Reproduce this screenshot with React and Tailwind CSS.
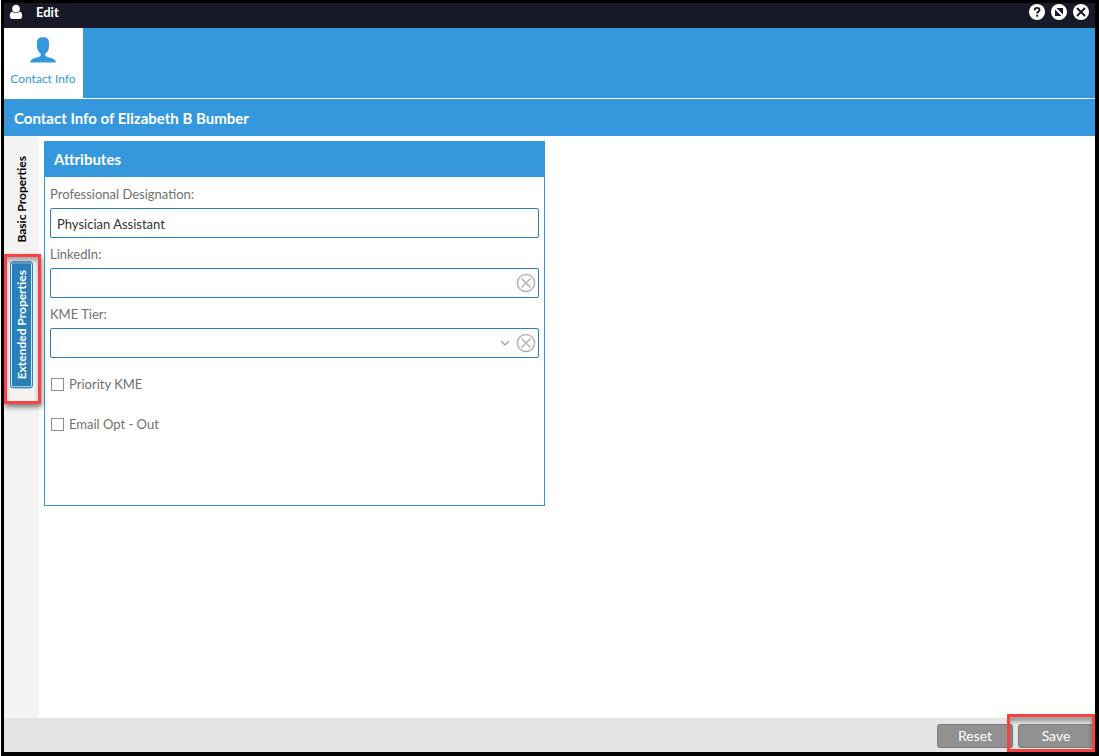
import React, { useState } from 'react';

function ClearIcon() {
  return (
    <svg viewBox="0 0 20 20" className="h-5 w-5" fill="none" stroke="#b3b3b3" strokeWidth="1.5" aria-hidden="true">
      <circle cx="10" cy="10" r="8.6" />
      <path d="M5.5 5.5l9 9M14.5 5.5l-9 9" />
    </svg>
  );
}

function PersonIcon() {
  return (
    <svg viewBox="0 0 14 16" className="h-4 w-3.5" fill="#fff" aria-hidden="true">
      <path d="M7 .8c2.200 0 3.900 1.700 3.900 3.900S9.200 8.600 7 8.600 3.100 6.900 3.100 4.700 4.800.8 7 .8z" />
      <path d="M3.400 7.400C4.400 8.500 5.600 9.100 7 9.100s2.600-.6 3.600-1.700c1.700.3 2.600 2 2.600 4.600 0 1.900-1 3-2.600 3H3.400C1.800 15 .8 13.900.8 12c0-2.600.9-4.300 2.600-4.600z" />
    </svg>
  );
}

function ContactIcon() {
  return (
    <svg viewBox="0 0 26 26" className="h-[26px] w-[26px]" fill="#3598dc" aria-hidden="true">
      <path d="M13 .2c4.300 0 6 2 6 5.500v3.800c0 3.200-1.600 6-3.700 7v1.900c.6 1 3.300 1.800 6.300 2.800 3 .9 4.200 2 4.200 4.400H.2c0-2.400 1.200-3.500 4.200-4.400 3-1 5.700-1.800 6.300-2.800v-1.900C8.600 15.500 7 12.700 7 9.500V5.700C7 2.200 8.700.2 13 .2z" />
    </svg>
  );
}

function WindowButton({ label, children }) {
  return (
    <button type="button" aria-label={label} className="h-4 w-4">
      <svg viewBox="0 0 16 16" className="h-4 w-4" fill="none" stroke="#171926" aria-hidden="true">
        <circle cx="8" cy="8" r="8" fill="#fff" stroke="none" />
        {children}
      </svg>
    </button>
  );
}

function SideTab({ label, active, onClick }) {
  const look = active
    ? 'border border-[#2980b9] bg-[#2980b9] text-white ring-1 ring-inset ring-[#d5e6f1]'
    : 'text-black';
  return (
    <button
      type="button"
      onClick={onClick}
      className={`flex w-[23px] rotate-180 items-center justify-center rounded-[3px] px-2 text-[12px] leading-4 font-bold [writing-mode:vertical-rl] ${look}`}
    >
      {label}
    </button>
  );
}

function Field({ id, label, children }) {
  return (
    <div>
      <label htmlFor={id} className="flex h-[30px] items-center pt-1 text-[13px]">
        {label}
      </label>
      <div className="flex h-[30px] items-center rounded-[2px] border border-[#2980b9] bg-white">{children}</div>
    </div>
  );
}

function Check({ id, label }) {
  return (
    <div className="flex h-10 items-center gap-[5px] px-px">
      <input id={id} type="checkbox" className="h-[13px] w-[13px] appearance-none border border-[#8c8c8c] bg-white checked:bg-[#2980b9]" />
      <label htmlFor={id} className="pt-0.5 text-[13px]">{label}</label>
    </div>
  );
}

const highlight = 'pointer-events-none absolute border-3 border-[#fa4141]';
const textBox = 'h-full min-w-0 flex-1 px-1.5 pt-0.5 text-[13px] text-[#333] outline-none';

export default function App() {
  const [tab, setTab] = useState('extended');
  const [designation, setDesignation] = useState('Physician Assistant');
  const [linkedIn, setLinkedIn] = useState('');
  const [tier, setTier] = useState('');

  return (
    <div className="ml-px flex min-h-screen flex-col border-3 border-r-4 border-b-4 border-black bg-white font-['Lato',sans-serif] text-[#707070]">
      <header className="flex h-[25px] items-start justify-between bg-[#171926] pr-1.5 pl-[5px] text-white">
        <div className="flex items-start gap-[13px]">
          <div className="pt-px"><PersonIcon /></div>
          <h1 className="text-[13px] leading-[18px] font-bold">Edit</h1>
        </div>
        <div className="flex gap-1.5 pt-px">
          <WindowButton label="Help">
            <path d="M5.700 6.200c0-1.500 1-2.300 2.400-2.300s2.400.8 2.400 2c0 1.600-2.300 1.700-2.300 3.600" strokeWidth="1.900" />
            <path d="M8.200 10.700v2" strokeWidth="2" />
          </WindowButton>
          <WindowButton label="Maximize">
            <path d="M5.500 4H12v6.500zM4 5.500V12h6.500z" fill="#171926" stroke="none" />
          </WindowButton>
          <WindowButton label="Close">
            <path d="M4 4l8 8M12 4l-8 8" strokeWidth="1.900" />
          </WindowButton>
        </div>
      </header>

      <nav className="flex h-[71px] border-b border-white bg-[#3598dc]">
        <button type="button" className="-mb-px flex w-[79px] flex-col items-center gap-1.5 bg-white pt-[9px] pr-px text-[12px] leading-5 text-[#3598dc]">
          <ContactIcon />
          Contact Info
        </button>
      </nav>

      <h2 className="flex h-[37px] items-center bg-[#3598dc] px-2.5 pt-px text-[15px] font-bold text-white">
        Contact Info of Elizabeth B Bumber
      </h2>

      <div className="flex flex-1">
        <aside className="flex w-[35px] shrink-0 flex-col items-center gap-2.5 bg-[#f3f3f3] pt-3 pr-px">
          <SideTab label="Basic Properties" active={tab === 'basic'} onClick={() => setTab('basic')} />
          <div className="relative">
            <SideTab label="Extended Properties" active={tab === 'extended'} onClick={() => setTab('extended')} />
            <div className={`${highlight} -top-[7px] -right-2 -bottom-4 -left-1.5 shadow-[1px_3px_5px_rgba(0,0,0,0.5),inset_0_4px_4px_rgba(0,0,0,0.3)]`} />
          </div>
        </aside>

        <main className="flex-1 p-[5px]">
          <section className="min-h-[365px] w-full max-w-[501px] border border-[#3598dc]">
            <h3 className="flex h-[35px] items-center bg-[#3598dc] px-[9px] text-[15px] font-bold text-white">Attributes</h3>
            <form className="px-[5px] pt-px">
              <Field id="designation" label="Professional Designation:">
                <input id="designation" value={designation} onChange={(e) => setDesignation(e.target.value)} className={textBox} />
              </Field>
              <Field id="linkedin" label="LinkedIn:">
                <input id="linkedin" value={linkedIn} onChange={(e) => setLinkedIn(e.target.value)} className={textBox} />
                <button type="button" aria-label="Clear LinkedIn" onClick={() => setLinkedIn('')} className="mr-0.5"><ClearIcon /></button>
              </Field>
              <Field id="tier" label="KME Tier:">
                <div className="relative flex flex-1">
                  <select id="tier" value={tier} onChange={(e) => setTier(e.target.value)} className="h-7 w-full appearance-none px-1.5 text-[13px] text-[#333] outline-none">
                    <option value=""></option>
                  </select>
                  <svg viewBox="0 0 10 6" className="pointer-events-none absolute top-[11px] right-1.5 h-1.5 w-2.5" fill="none" stroke="#a6a6a6" strokeWidth="1.500" aria-hidden="true">
                    <path d="M1 1l4 4 4-4" />
                  </svg>
                </div>
                <button type="button" aria-label="Clear KME Tier" onClick={() => setTier('')} className="mr-0.5"><ClearIcon /></button>
              </Field>
              <div className="pt-1.5">
                <Check id="priority" label="Priority KME" />
                <Check id="optout" label="Email Opt - Out" />
              </div>
            </form>
          </section>
        </main>
      </div>

      <footer className="flex h-[34px] items-center justify-end gap-[5px] bg-[#e4e4e4] pt-0.5 pr-px">
        <button type="button" className="h-6 w-[76px] rounded-[3px] border border-[#7d7d7d] bg-[#919191] text-[14px] leading-5 text-white">Reset</button>
        <div className="relative flex">
          <button type="button" className="h-6 w-[76px] rounded-[3px] border border-[#7d7d7d] bg-[#919191] text-[14px] leading-5 text-white">Save</button>
          <div className={`${highlight} -top-[10px] -right-px -bottom-1 -left-[11px] shadow-[inset_0_4px_4px_rgba(0,0,0,0.35)]`} />
        </div>
      </footer>
    </div>
  );
}
